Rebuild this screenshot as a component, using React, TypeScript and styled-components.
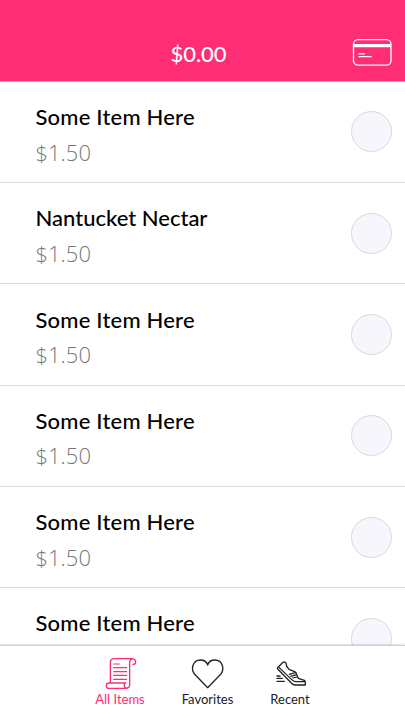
import React from "react";
import styled, { createGlobalStyle } from "styled-components";

const GlobalStyle = createGlobalStyle`
  * { box-sizing: border-box; }
  html, body { margin: 0; padding: 0; overflow: hidden; background: #fff; }
`;

const Screen = styled.div`
  width: 405px;
  height: 720px;
  display: flex;
  flex-direction: column;
  overflow: hidden;
  background: #fff;
  font-family: Lato, "Open Sans", sans-serif;
`;

const Header = styled.header`
  flex: none;
  height: 82px;
  display: grid;
  grid-template-columns: 1fr auto 1fr;
  align-items: center;
  padding: 26px 13px 0 5px;
  background: #ff2d73;
  border-bottom: 1px solid #d8a5b5;
`;

const Total = styled.h1`
  grid-column: 2;
  margin: 0;
  font-size: 22px;
  line-height: 28px;
  font-weight: 500;
  letter-spacing: 0;
  color: #fff;
`;

const CardButton = styled.button`
  justify-self: end;
  display: flex;
  margin-bottom: 3px;
  padding: 0;
  border: 0;
  background: none;
  color: #fff;
`;

const List = styled.ul`
  flex: 1;
  min-height: 0;
  margin: -0.2px 0 0;
  padding: 0;
  overflow: hidden;
  list-style: none;
`;

const Row = styled.li`
  height: 101.3px;
  display: flex;
  align-items: center;
  justify-content: space-between;
  padding: 0 12.6px 0 35.5px;
  border-bottom: 1px solid #dcdcdd;
`;

const Details = styled.div`
  padding-top: 4.6px;
`;

const Name = styled.div<{ $tracking: number }>`
  font-size: 22px;
  line-height: 28px;
  font-weight: 500;
  letter-spacing: ${(p) => p.$tracking}px;
  color: #000;
  white-space: nowrap;
`;

const Price = styled.div`
  margin-top: 6.6px;
  font-family: "Open Sans", sans-serif;
  font-size: 22px;
  line-height: 28px;
  font-weight: 300;
  letter-spacing: 0;
  color: #777;
`;

const Selector = styled.span`
  flex: none;
  width: 41px;
  height: 41px;
  border: 1px solid #d9d9dd;
  border-radius: 50%;
  background: #f7f6fc;
`;

const TabBar = styled.nav`
  position: relative;
  flex: none;
  height: 75px;
  display: flex;
  gap: 36.5px;
  padding: 10px 0 0 95px;
  border-top: 1px solid #cfcfcf;
  background: #fff;
  box-shadow: 0 0 2px rgba(0, 0, 0, 0.28);
`;

const Tab = styled.div<{ $width: number; $active?: boolean }>`
  width: ${(p) => p.$width}px;
  display: flex;
  flex-direction: column;
  align-items: center;
  color: ${(p) => (p.$active ? "#ff2d73" : "#222")};
`;

const TabIcon = styled.div`
  height: 34px;
  display: flex;
  align-items: center;
`;

const TabLabel = styled.span`
  margin-top: 1px;
  font-size: 13px;
  line-height: 16px;
  white-space: nowrap;
`;

const CardIcon = () => (
  <svg width="40" height="28" viewBox="0 -0.4 40 28" fill="none" stroke="currentColor">
    <rect x="1.5" y="1.2" width="37.5" height="25.6" rx="4.5" strokeWidth="1.3" />
    <path d="M1.5 7.3H39" strokeWidth="3.3" />
    <path d="M6.5 15.5H13M6.5 18.2H19.6" strokeWidth="1.2" />
  </svg>
);

const ScrollIcon = () => (
  <svg width="32" height="33" viewBox="57 51 96 99" overflow="visible" fill="none" stroke="currentColor" strokeWidth="4" strokeLinecap="round" strokeLinejoin="round">
    <path d="M76 128V68Q76 56 88 56H141Q152 57 152 67Q151 74 144 73M142 57Q134 58 134 69V135Q133 145 122 145H72Q64 145 64 137Q64 129 72 129H120M122 129Q116 132 118 139Q119 144 124 144" />
    <path d="M86 72H103M86 83H125M86 95H125M86 106H125M86 118H125" strokeWidth="3.5" />
  </svg>
);

const HeartIcon = () => (
  <svg width="33" height="31" viewBox="63 54 99 93" fill="none" stroke="currentColor" strokeWidth="4" strokeLinejoin="round">
    <path d="M113 143L74 103C62 90 67 60 91 60C103 60 110 65 113 75C116 65 123 60 135 60C159 60 164 90 152 103Z" />
  </svg>
);

const ShoeIcon = () => (
  <svg width="32" height="27" viewBox="57 60 96 81" overflow="visible" fill="none" stroke="currentColor" strokeWidth="4" strokeLinecap="round" strokeLinejoin="round">
    <path d="M69 82L84 67Q90 64 93 70Q94 82 102 88L119 95Q124 97 125 104L130 115L148 121Q152 124 151 135H119Q114 134 109 129L68 87Q66 84 69 82Z" />
    <path d="M72 82L110 119Q115 124 122 125H150M103 103L121 98M107 109L125 104M113 114L127 111" strokeWidth="3.6" />
    <path d="M66 108H75M66 115H82M66 124H88" />
  </svg>
);

const items = [
  { name: "Some Item Here", price: "$1.50", tracking: 0.2 },
  { name: "Nantucket Nectar", price: "$1.50", tracking: 0 },
  { name: "Some Item Here", price: "$1.50", tracking: 0.2 },
  { name: "Some Item Here", price: "$1.50", tracking: 0.2 },
  { name: "Some Item Here", price: "$1.50", tracking: 0.2 },
  { name: "Some Item Here", price: "$1.50", tracking: 0.2 },
];

export default function App() {
  return (
    <Screen>
      <GlobalStyle />
      <Header>
        <Total>$0.00</Total>
        <CardButton aria-label="Payment card">
          <CardIcon />
        </CardButton>
      </Header>
      <List>
        {items.map((item, i) => (
          <Row key={i}>
            <Details>
              <Name $tracking={item.tracking}>{item.name}</Name>
              <Price>{item.price}</Price>
            </Details>
            <Selector />
          </Row>
        ))}
      </List>
      <TabBar>
        <Tab $width={50} $active>
          <TabIcon><ScrollIcon /></TabIcon>
          <TabLabel>All Items</TabLabel>
        </Tab>
        <Tab $width={52}>
          <TabIcon><HeartIcon /></TabIcon>
          <TabLabel>Favorites</TabLabel>
        </Tab>
        <Tab $width={40}>
          <TabIcon><ShoeIcon /></TabIcon>
          <TabLabel>Recent</TabLabel>
        </Tab>
      </TabBar>
    </Screen>
  );
}
